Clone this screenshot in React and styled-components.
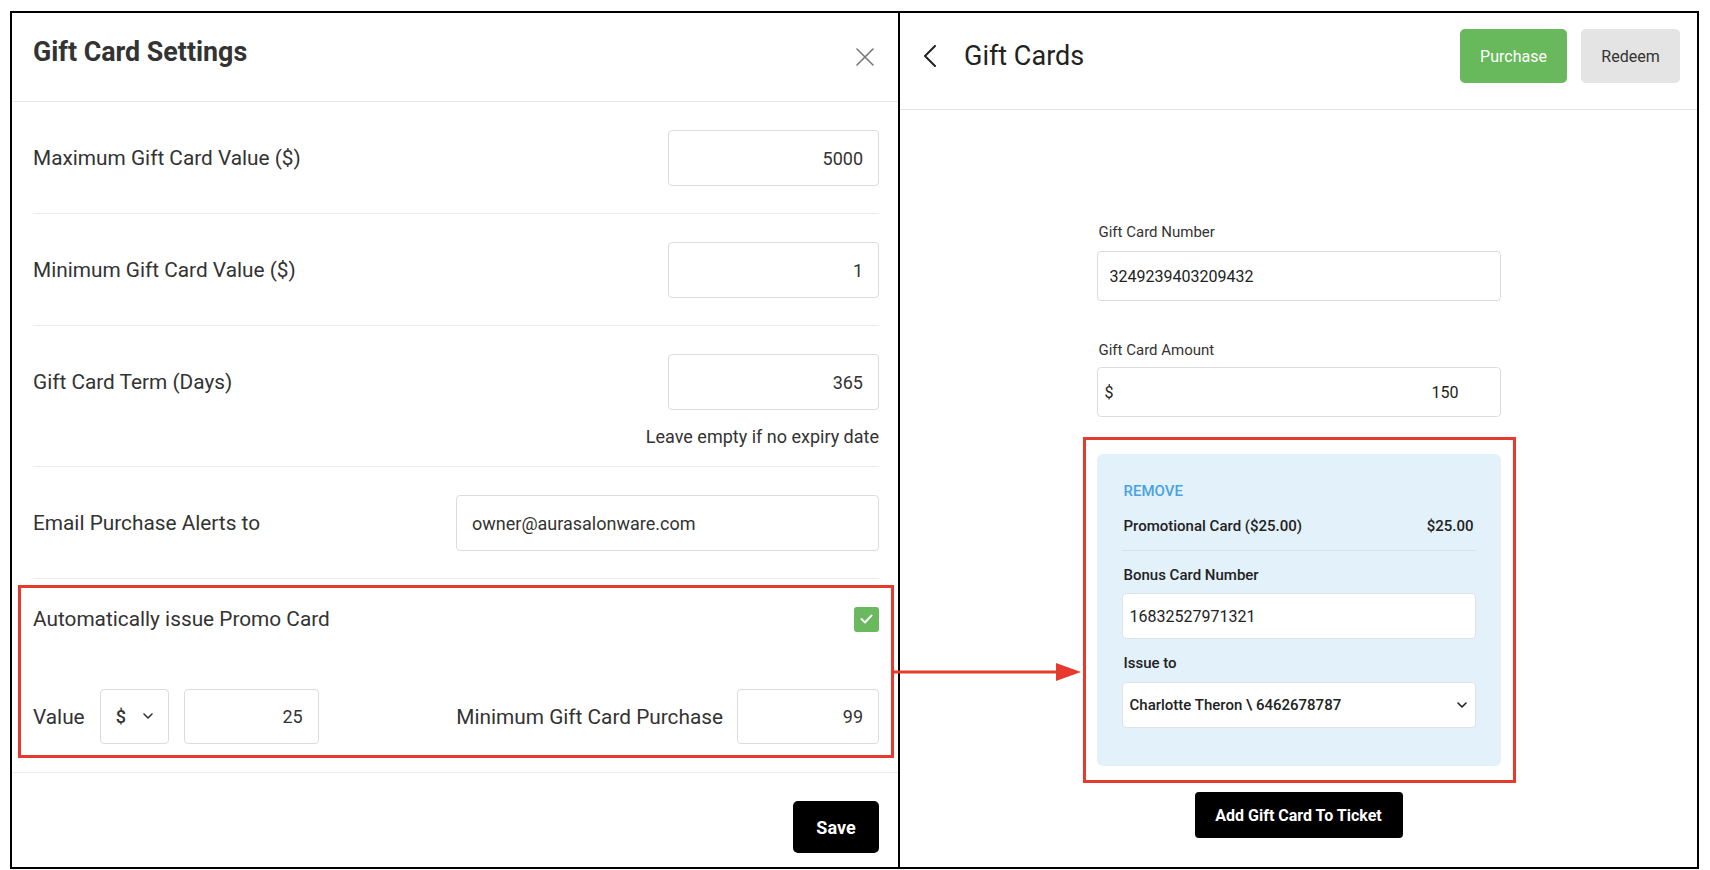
import React from 'react';
import styled, { createGlobalStyle } from 'styled-components';

const GlobalStyle = createGlobalStyle`
  html, body { margin: 0; padding: 0; background: #fff; }
  body { font-family: Roboto, "Liberation Sans", Arial, sans-serif; color: #333; }
  * { box-sizing: border-box; }
  input { font-family: inherit; }
`;

const RED = '#e63a2e';

const Frame = styled.div`
  position: relative;
  margin: 11px 0 0 10px;
  width: 1689px;
  height: 858px;
  border: 2px solid #000;
  display: grid;
  grid-template-columns: 886px 2px 1fr;
  background: #fff;
`;

const PanelDivider = styled.div`
  background: #000;
`;

const LeftPanel = styled.section`
  display: flex;
  flex-direction: column;
  min-width: 0;
`;

const LeftHeader = styled.header`
  height: 89px;
  display: flex;
  align-items: center;
  justify-content: space-between;
  padding: 0 24px 0 21px;
  border-bottom: 1px solid #e6e6e6;
`;

const Title = styled.h1`
  margin: 0 0 10px;
  font-size: 26.8px;
  font-weight: 700;
  color: #333;
  line-height: 32px;
`;

const IconButton = styled.button`
  border: 0;
  background: none;
  padding: 0;
  display: flex;
  cursor: pointer;
`;

const Row = styled.div`
  margin: 0 19px 0 21px;
  padding: 28px 0 ${(p) => p.$pb || 27}px;
  border-bottom: 1px solid #ececec;
`;

const RowMain = styled.div`
  display: flex;
  align-items: center;
  justify-content: space-between;
`;

const Label = styled.span`
  font-size: 20.8px;
  color: #333;
  white-space: nowrap;
`;

const Field = styled.input`
  width: ${(p) => p.$w}px;
  height: ${(p) => p.$h || 56}px;
  border: 1px solid #dcdcdc;
  border-radius: 4px;
  padding: 0 15px;
  font-size: 18px;
  color: #333;
  text-align: ${(p) => p.$align || 'right'};
  background: #fff;
  outline: none;
`;

const Note = styled.div`
  margin-top: 16px;
  font-size: 18px;
  line-height: 22px;
  text-align: right;
  color: #333;
`;

const PromoSection = styled.div`
  position: relative;
  margin: 0 19px 0 21px;
  padding: 27px 0 28px;

  &::after {
    content: '';
    position: absolute;
    top: 6px;
    bottom: 14px;
    left: -15px;
    right: -15px;
    border: 3px solid ${RED};
    pointer-events: none;
  }
`;

const CheckRow = styled.div`
  height: 26px;
  display: flex;
  align-items: center;
  justify-content: space-between;
`;

const Checkbox = styled.span`
  width: 25px;
  height: 25px;
  border-radius: 3px;
  background: #6ab95e;
  display: flex;
  align-items: center;
  justify-content: center;
`;

const ValueRow = styled.div`
  margin-top: 57px;
  height: 55px;
  display: flex;
  align-items: center;
  justify-content: space-between;
`;

const Group = styled.div`
  display: flex;
  align-items: center;
  gap: ${(p) => p.$gap}px;
`;

const CurrencySelect = styled.div`
  width: 69px;
  height: 55px;
  border: 1px solid #dcdcdc;
  border-radius: 4px;
  display: flex;
  align-items: center;
  justify-content: space-between;
  padding: 0 15px 0 15px;
  font-size: 18px;
  font-weight: 500;
  color: #333;
`;

const Footer = styled.div`
  padding: 28px 19px 0 21px;
  border-top: 1px solid #ececec;
  display: flex;
  justify-content: flex-end;
`;

const BlackButton = styled.button`
  width: ${(p) => p.$w}px;
  height: ${(p) => p.$h}px;
  border: 0;
  border-radius: ${(p) => p.$r || 4}px;
  background: #000;
  color: #fff;
  font-family: inherit;
  font-weight: 700;
  font-size: ${(p) => p.$fs}px;
  cursor: pointer;
`;

const RightPanel = styled.section`
  display: flex;
  flex-direction: column;
  min-width: 0;
`;

const RightHeader = styled.header`
  height: 97px;
  display: flex;
  align-items: center;
  padding: 0 17px 10px 23px;
  border-bottom: 1px solid #e3e3e3;
`;

const PageTitle = styled.h2`
  margin: 0 0 0 27px;
  font-size: 27px;
  font-weight: 400;
  color: #222;
  flex: 1;
`;

const HeaderButtons = styled.div`
  display: flex;
  gap: 14px;
`;

const TopButton = styled.button`
  width: ${(p) => p.$w}px;
  height: 54px;
  border: 0;
  border-radius: 5px;
  font-family: inherit;
  font-size: 16px;
  background: ${(p) => (p.$primary ? '#68b85c' : '#e4e4e4')};
  color: ${(p) => (p.$primary ? '#fff' : '#333')};
  cursor: pointer;
`;

const RightContent = styled.div`
  padding-top: 113px;
`;

const Column = styled.div`
  width: 404px;
  margin: 0 auto;
  display: flex;
  flex-direction: column;
`;

const FieldLabel = styled.div`
  font-size: 15px;
  line-height: 18px;
  color: #333;
  margin-top: ${(p) => p.$mt || 0}px;
  margin-bottom: ${(p) => p.$mb}px;
  padding-left: 2px;
`;

const TextBox = styled.input`
  height: 50px;
  width: 100%;
  border: 1px solid #dcdcdc;
  border-radius: 4px;
  padding: 0 12px;
  font-size: 16px;
  color: #222;
  outline: none;
`;

const AmountBox = styled.div`
  height: 50px;
  border: 1px solid #dcdcdc;
  border-radius: 4px;
  padding: 0 41px 0 7px;
  display: flex;
  align-items: center;
  justify-content: space-between;
  font-size: 16px;
  color: #222;
`;

const PromoCard = styled.div`
  position: relative;
  margin-top: 37px;
  background: #e3f1fb;
  border-radius: 6px;
  padding: 28px 25px 38px;
  display: flex;
  flex-direction: column;

  &::after {
    content: '';
    position: absolute;
    top: -17px;
    bottom: -17px;
    left: -14px;
    right: -15px;
    border: 3px solid ${RED};
    pointer-events: none;
  }
`;

const RemoveLink = styled.span`
  font-size: 15px;
  line-height: 18px;
  font-weight: 500;
  color: #4aa3df;
  padding-left: 2px;
`;

const PromoLine = styled.div`
  margin-top: 17px;
  padding: 0 2px 15px;
  line-height: 18px;
  border-bottom: 1px solid #d3e2ec;
  display: flex;
  justify-content: space-between;
  font-size: 15px;
  font-weight: 500;
  color: #222;
`;

const CardLabel = styled.div`
  margin-top: 15px;
  margin-bottom: ${(p) => p.$mb}px;
  font-size: 15px;
  line-height: 18px;
  font-weight: 500;
  color: #222;
  padding-left: 2px;
`;

const CardInput = styled.input`
  height: 46px;
  width: 100%;
  background: #fff;
  border: 1px solid #dde3e8;
  border-radius: 4px;
  padding: 0 7px;
  font-size: 16px;
  color: #222;
  outline: none;
`;

const CardSelect = styled.div`
  height: 46px;
  background: #fff;
  border: 1px solid #dde3e8;
  border-radius: 4px;
  padding: 0 8px 0 7px;
  display: flex;
  align-items: center;
  justify-content: space-between;
  font-size: 15px;
  font-weight: 500;
  color: #222;
`;

const ButtonRow = styled.div`
  margin-top: 26px;
  display: flex;
  justify-content: center;
`;

const Arrow = styled.svg`
  position: absolute;
  left: 882px;
  top: 648px;
  overflow: visible;
  z-index: 2;
`;

const ChevronDown = ({ color = '#333' }) => (
  <svg width="10" height="7" viewBox="0 0 10 7">
    <polyline points="1,1 5,5 9,1" fill="none" stroke={color} strokeWidth="1.6" strokeLinecap="round" strokeLinejoin="round" />
  </svg>
);

export default function App() {
  return (
    <>
      <GlobalStyle />
      <Frame>
        <LeftPanel>
          <LeftHeader>
            <Title>Gift Card Settings</Title>
            <IconButton aria-label="Close">
              <svg width="18" height="18" viewBox="0 0 18 18">
                <path d="M1 1 L17 17 M17 1 L1 17" stroke="#777" strokeWidth="1.6" strokeLinecap="round" />
              </svg>
            </IconButton>
          </LeftHeader>

          <Row>
            <RowMain>
              <Label>Maximum Gift Card Value ($)</Label>
              <Field $w={211} readOnly value="5000" />
            </RowMain>
          </Row>
          <Row>
            <RowMain>
              <Label>Minimum Gift Card Value ($)</Label>
              <Field $w={211} readOnly value="1" />
            </RowMain>
          </Row>
          <Row $pb={18}>
            <RowMain>
              <Label>Gift Card Term (Days)</Label>
              <Field $w={211} readOnly value="365" />
            </RowMain>
            <Note>Leave empty if no expiry date</Note>
          </Row>
          <Row>
            <RowMain>
              <Label>Email Purchase Alerts to</Label>
              <Field $w={423} $align="left" readOnly value="owner@aurasalonware.com" />
            </RowMain>
          </Row>

          <PromoSection>
            <CheckRow>
              <Label>Automatically issue Promo Card</Label>
              <Checkbox>
                <svg width="13" height="10" viewBox="0 0 13 10">
                  <polyline points="1.5,5 5,8.5 11.5,1.5" fill="none" stroke="#fff" strokeWidth="2" strokeLinecap="round" strokeLinejoin="round" />
                </svg>
              </Checkbox>
            </CheckRow>
            <ValueRow>
              <Group $gap={15}>
                <Label>Value</Label>
                <CurrencySelect>
                  <span>$</span>
                  <ChevronDown />
                </CurrencySelect>
                <Field $w={135} $h={55} readOnly value="25" />
              </Group>
              <Group $gap={14}>
                <Label>Minimum Gift Card Purchase</Label>
                <Field $w={142} $h={55} readOnly value="99" />
              </Group>
            </ValueRow>
          </PromoSection>

          <Footer>
            <BlackButton $w={86} $h={52} $fs={18} $r={5}>Save</BlackButton>
          </Footer>
        </LeftPanel>

        <PanelDivider />

        <RightPanel>
          <RightHeader>
            <IconButton aria-label="Back">
              <svg width="14" height="22" viewBox="0 0 14 22">
                <polyline points="12,1 2,11 12,21" fill="none" stroke="#222" strokeWidth="2" strokeLinecap="round" strokeLinejoin="round" />
              </svg>
            </IconButton>
            <PageTitle>Gift Cards</PageTitle>
            <HeaderButtons>
              <TopButton $primary $w={107}>Purchase</TopButton>
              <TopButton $w={99}>Redeem</TopButton>
            </HeaderButtons>
          </RightHeader>

          <RightContent>
            <Column>
              <FieldLabel $mb={10}>Gift Card Number</FieldLabel>
              <TextBox readOnly value="3249239403209432" />
              <FieldLabel $mt={40} $mb={8}>Gift Card Amount</FieldLabel>
              <AmountBox>
                <span>$</span>
                <span>150</span>
              </AmountBox>

              <PromoCard>
                <RemoveLink>REMOVE</RemoveLink>
                <PromoLine>
                  <span>Promotional Card ($25.00)</span>
                  <span>$25.00</span>
                </PromoLine>
                <CardLabel $mb={9}>Bonus Card Number</CardLabel>
                <CardInput readOnly value="16832527971321" />
                <CardLabel $mb={10}>Issue to</CardLabel>
                <CardSelect>
                  <span>Charlotte Theron \ 6462678787</span>
                  <ChevronDown color="#222" />
                </CardSelect>
              </PromoCard>

              <ButtonRow>
                <BlackButton $w={208} $h={46} $fs={16}>Add Gift Card To Ticket</BlackButton>
              </ButtonRow>
            </Column>
          </RightContent>
        </RightPanel>

        <Arrow width="190" height="24" viewBox="0 0 190 24">
          <line x1="0" y1="11" x2="165" y2="11" stroke={RED} strokeWidth="3" />
          <polygon points="162,2 187,11 162,20" fill={RED} />
        </Arrow>
      </Frame>
    </>
  );
}
